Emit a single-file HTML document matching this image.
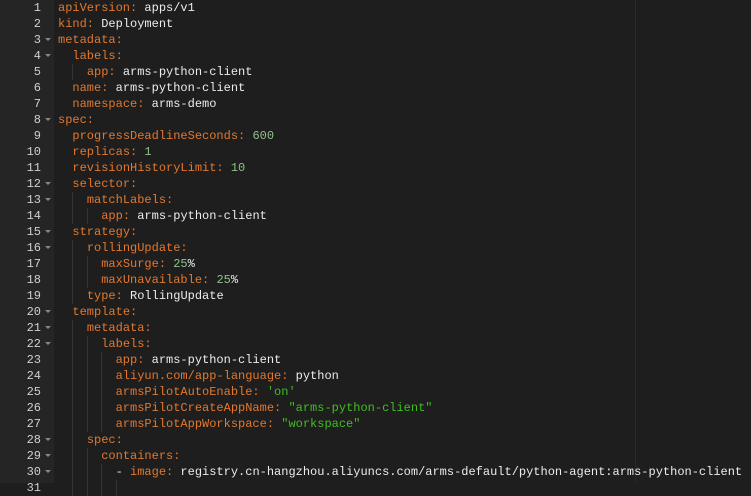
<!DOCTYPE html>
<html><head><meta charset="utf-8"><style>
html,body{margin:0;padding:0;background:#1e1e1e;width:751px;height:483px;overflow:hidden}
.g{position:absolute;left:0;top:0;width:54px;height:483px;background:#252525}
.pm{position:absolute;left:635px;top:0;width:1px;height:483px;background:#2a2a2a}
.l{position:absolute;left:0;height:16px;line-height:16px;font-family:"Liberation Mono",monospace;font-size:12px;white-space:pre;color:#ececec}
.n{position:absolute;left:0;width:41px;text-align:right;color:#d0d0d0}
.a{position:absolute;left:45px;top:6px;width:0;height:0;border-left:3px solid transparent;border-right:3px solid transparent;border-top:3px solid #888}
.c{position:absolute;left:58px}
.k{color:#e3782e}.s{color:#3fbf1f}.d{color:#8fc08a}
.ig{position:absolute;top:0;width:1px;height:16px;background:#333}
</style></head><body>
<div class="g"></div><div class="pm"></div>
<div id="r"></div>
<script>
var L=[
[0,'<span class="k">apiVersion:</span> apps/v1'],
[0,'<span class="k">kind:</span> Deployment'],
[0,'<span class="k">metadata:</span>',1],
[1,'<span class="k">labels:</span>',1],
[2,'<span class="k">app:</span> arms-python-client'],
[1,'<span class="k">name:</span> arms-python-client'],
[1,'<span class="k">namespace:</span> arms-demo'],
[0,'<span class="k">spec:</span>',1],
[1,'<span class="k">progressDeadlineSeconds:</span> <span class="d">600</span>'],
[1,'<span class="k">replicas:</span> <span class="d">1</span>'],
[1,'<span class="k">revisionHistoryLimit:</span> <span class="d">10</span>'],
[1,'<span class="k">selector:</span>',1],
[2,'<span class="k">matchLabels:</span>',1],
[3,'<span class="k">app:</span> arms-python-client'],
[1,'<span class="k">strategy:</span>',1],
[2,'<span class="k">rollingUpdate:</span>',1],
[3,'<span class="k">maxSurge:</span> <span class="d">25</span>%'],
[3,'<span class="k">maxUnavailable:</span> <span class="d">25</span>%'],
[2,'<span class="k">type:</span> RollingUpdate'],
[1,'<span class="k">template:</span>',1],
[2,'<span class="k">metadata:</span>',1],
[3,'<span class="k">labels:</span>',1],
[4,'<span class="k">app:</span> arms-python-client'],
[4,'<span class="k">aliyun.com/app-language:</span> python'],
[4,'<span class="k">armsPilotAutoEnable:</span> <span class="s">\'on\'</span>'],
[4,'<span class="k">armsPilotCreateAppName:</span> <span class="s">"arms-python-client"</span>'],
[4,'<span class="k">armsPilotAppWorkspace:</span> <span class="s">"workspace"</span>'],
[2,'<span class="k">spec:</span>',1],
[3,'<span class="k">containers:</span>',1],
[4,'- <span class="k">image:</span> registry.cn-hangzhou.aliyuncs.com/arms-default/python-agent:arms-python-client',1],
[5,'']
];
var h='';
L.forEach(function(x,i){
 var t=0+i*16;
 h+='<div class="l" style="top:'+t+'px;width:751px"><span class="n">'+(i+1)+'</span>'+(x[2]?'<span class="a"></span>':'');
 for(var k=2;k<=x[0];k++){h+='<span class="ig" style="left:'+(58+(k-1)*14.4)+'px"></span>';}
 h+='<span class="c">'+'  '.repeat(x[0])+x[1]+'</span></div>';
});
document.getElementById('r').innerHTML=h;
</script>
</body></html>
